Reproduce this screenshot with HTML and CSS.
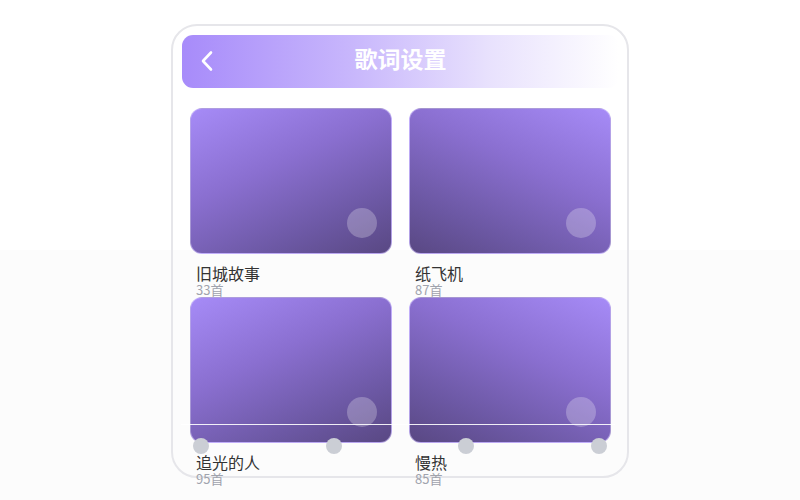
FILE: index.html
```html
<!DOCTYPE html>
<html lang="zh-CN">
<head>
    <meta charset="UTF-8">
    <meta name="viewport" content="width=device-width, initial-scale=1.0">
    <title>歌词设置</title>
    <link rel="stylesheet" href="styles.css">
</head>
<body>

    <div class="phone">
        <div class="header">
            <span class="back">
                <svg width="14" height="22" viewBox="0 0 14 22"><path d="M11 2.5 L3 11 L11 19.5" fill="none" stroke="#fff" stroke-width="2.6" stroke-linecap="round" stroke-linejoin="round"/></svg>
            </span>
            <h1>歌词设置</h1>
        </div>

        <div class="album-grid">
            <div class="album">
                <div class="cover cover-left"><span class="play-dot"></span></div>
                <div class="name">旧城故事</div>
                <div class="count">33首</div>
            </div>
            <div class="album">
                <div class="cover cover-right"><span class="play-dot"></span></div>
                <div class="name">纸飞机</div>
                <div class="count">87首</div>
            </div>
            <div class="album">
                <div class="cover cover-left"><span class="play-dot"></span></div>
                <div class="name">追光的人</div>
                <div class="count">95首</div>
            </div>
            <div class="album">
                <div class="cover cover-right"><span class="play-dot"></span></div>
                <div class="name">慢热</div>
                <div class="count">85首</div>
            </div>
        </div>

        <!-- Slider-Overlay über den Karten -->
        <div class="slider-line"></div>
        <div class="slider-dots">
            <span></span><span></span><span></span><span></span>
        </div>
    </div>

</body>
</html>
```

FILE: styles.css
```css
body {
    margin: 0;
    height: 500px;
    background: linear-gradient(to bottom, #ffffff 250px, #fcfcfc 250px);
    font-family: "Noto Sans CJK SC", "Noto Sans", sans-serif;
}

.phone {
    position: relative;
    box-sizing: border-box;
    width: 458px;
    height: 454px;
    margin: 24px auto 0;
    padding: 9px 8px 9px 9px;
    border: 2px solid #e6e6ea;
    border-radius: 26px;
}

.header {
    position: relative;
    height: 53px;
    display: flex;
    align-items: center;
    justify-content: center;
    border-radius: 11px;
    background: linear-gradient(90deg, #a78bfa 0%, #c9b8fc 40%, #e8e1fd 70%, #ffffff 100%);
}

.header .back {
    position: absolute;
    left: 18px;
    top: 15px;
    display: flex;
}

.header h1 {
    margin: 0 0 6px;
    font-size: 23px;
    font-weight: bold;
    color: #ffffff;
    line-height: 1;
}

.album-grid {
    display: grid;
    grid-template-columns: 202px 202px;
    grid-template-rows: 189px 189px;
    column-gap: 17px;
    margin: 20px 0 0 8px;
}

.album {
    min-width: 0;
}

.cover {
    position: relative;
    box-sizing: border-box;
    height: 146px;
    border-radius: 12px;
    border: 1px solid rgba(214, 200, 255, 0.6);
}

.cover-left {
    background: linear-gradient(155deg, #a68bf7 0%, #8a6fd0 40%, #6c58a4 75%, #594883 100%);
}

.cover-right {
    background: linear-gradient(205deg, #a68bf7 0%, #8a6fd0 40%, #6c58a4 75%, #594883 100%);
}

.play-dot {
    position: absolute;
    right: 14px;
    bottom: 15px;
    width: 30px;
    height: 30px;
    border-radius: 50%;
    background: rgba(255, 255, 255, 0.25);
}

.name {
    margin: 10px 0 0 6px;
    font-size: 16px;
    line-height: 18px;
    color: #333333;
}

.count {
    margin: 1px 0 0 6px;
    font-size: 13px;
    line-height: 13px;
    color: #a0a3ad;
}

.slider-line {
    position: absolute;
    left: 8px;
    top: 398px;
    width: 434px;
    height: 1px;
    background: rgba(255, 255, 255, 0.9);
}

.slider-dots {
    position: absolute;
    left: 20px;
    right: 20px;
    top: 412px;
    display: flex;
    justify-content: space-between;
}

.slider-dots span {
    width: 16px;
    height: 16px;
    border-radius: 50%;
    background: #cbced5;
}
```
